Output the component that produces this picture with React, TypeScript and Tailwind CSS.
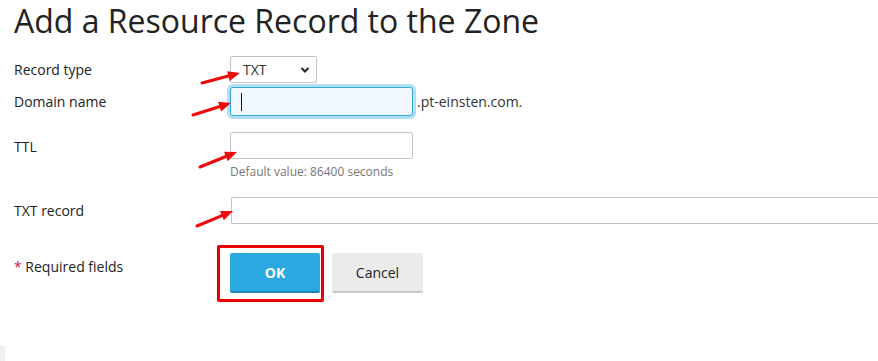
import React from "react";

function Arrows() {
  const arrows = [
    { x1: 202, y1: 83, x2: 240, y2: 73 },
    { x1: 193, y1: 115, x2: 231, y2: 103 },
    { x1: 200, y1: 167, x2: 237, y2: 152 },
    { x1: 197, y1: 226, x2: 233, y2: 211 },
  ];
  return (
    <svg className="absolute left-0 top-0 pointer-events-none" width={878} height={361}>
      {arrows.map((a, i) => {
        const dx = a.x2 - a.x1;
        const dy = a.y2 - a.y1;
        const len = Math.sqrt(dx * dx + dy * dy);
        const ux = dx / len;
        const uy = dy / len;
        const hl = 12;
        const hw = 5;
        const bx = a.x2 - ux * hl;
        const by = a.y2 - uy * hl;
        const p1 = `${a.x2},${a.y2}`;
        const p2 = `${bx - uy * hw},${by + ux * hw}`;
        const p3 = `${bx + uy * hw},${by - ux * hw}`;
        return (
          <g key={i}>
            <line x1={a.x1} y1={a.y1} x2={bx + ux * 2} y2={by + uy * 2} stroke="#ee0a0a" strokeWidth={3} strokeLinecap="round" />
            <polygon points={`${p1} ${p2} ${p3}`} fill="#ee0a0a" />
          </g>
        );
      })}
    </svg>
  );
}

export default function App() {
  return (
    <div
      className="relative w-[878px] h-[361px] overflow-hidden bg-white text-[#222] text-[14px]"
      style={{ fontFamily: '"Open Sans", "Noto Sans", sans-serif' }}
    >
      <div className="pl-[14px]">
        <h1 className="text-[32px] leading-[42px] font-normal text-[#222] whitespace-nowrap">
          Add a Resource Record to the Zone
        </h1>

        <div className="mt-[14px] flex flex-col">
          {/* Record type */}
          <div className="flex h-[27px]">
            <div className="w-[216px] pt-[4px] leading-[20px]">Record type</div>
            <div className="w-[87px] h-[27px] border border-[#c4c4c4] rounded-[2px] bg-white flex items-center justify-between pl-[12px] pr-[6px] text-[#333]">
              <span>TXT</span>
              <svg width="10" height="8" viewBox="0 0 10 8">
                <path d="M1.5 2 L5 5.5 L8.5 2" fill="none" stroke="#222" strokeWidth="2" />
              </svg>
            </div>
          </div>

          {/* Domain name */}
          <div className="flex mt-[4px] h-[29px]">
            <div className="w-[216px] pt-[5px] leading-[20px]">Domain name</div>
            <div className="w-[183px] h-[29px] border border-[#38a6de] rounded-[3px] bg-[#f2f9fe] shadow-[0_0_0_3px_#b1dff4] flex items-center pl-[10px]">
              <div className="w-[1px] h-[18px] bg-[#111]" />
            </div>
            <div className="pl-[4px] pt-[5px] leading-[20px] text-[#333]">.pt-einsten.com.</div>
          </div>

          {/* TTL */}
          <div className="flex mt-[16px]">
            <div className="w-[216px] pt-[5px] leading-[20px]">TTL</div>
            <div className="flex flex-col">
              <div className="w-[183px] h-[27px] border border-[#c4c4c4] rounded-[2px] bg-white" />
              <div className="mt-[5px] text-[12px] leading-[15px] text-[#777]">Default value: 86400 seconds</div>
            </div>
          </div>

          {/* TXT record */}
          <div className="flex mt-[18px] h-[27px]">
            <div className="w-[217px] pt-[4px] leading-[20px]">TXT record</div>
            <div className="flex-1 h-[27px] border border-[#c4c4c4] border-r-0 rounded-l-[2px] bg-white" />
          </div>

          {/* Buttons */}
          <div className="flex mt-[21px]">
            <div className="w-[203px] pt-[12px] leading-[20px]">
              <span className="text-[#b3224c]">*</span> Required fields
            </div>
            <div className="border-[3px] border-[#ee0000] rounded-[2px] pt-[5px] pl-[10px] pr-[1px] pb-[6px] flex">
              <div className="w-[90px] h-[40px] bg-[#29a9df] border-b-2 border-[#1d87b8] rounded-[2px] flex items-center justify-center text-white font-bold text-[14px]">
                OK
              </div>
            </div>
            <div className="ml-[8px] mt-[8px] w-[91px] h-[40px] bg-[#ebebeb] border-b-2 border-[#c8c8c8] rounded-[2px] flex items-center justify-center text-[#222] text-[14px]">
              Cancel
            </div>
          </div>
        </div>
      </div>

      <div className="absolute left-0 bottom-0 w-[5px] h-[16px] bg-[#f0f0f0] rounded-tr-[4px]" />
      <Arrows />
    </div>
  );
}
